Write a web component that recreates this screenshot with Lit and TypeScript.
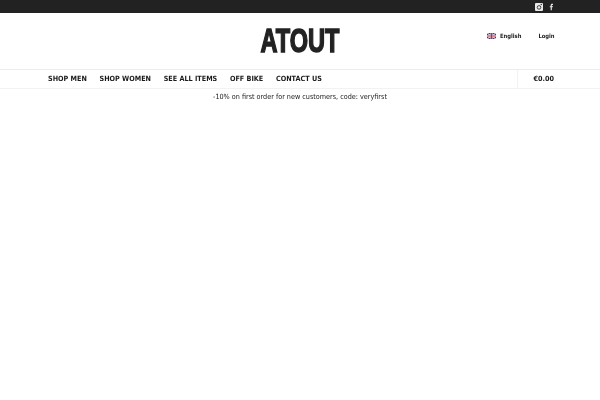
import { LitElement, html, css } from "lit";
import { customElement } from "lit/decorators.js";

@customElement("app-root")
export class AppRoot extends LitElement {
  static styles = css`
    :host { display: block; width: 600px; height: 400px; background: #fff; overflow: hidden; font-family: "DejaVu Sans", sans-serif; font-stretch: condensed; color: #1a1a1a; }
    .top { height: 13px; background: #222; display: flex; justify-content: flex-end; align-items: center; gap: 6px; padding-right: 46px; }
    .top svg { display: block; }
    .head { height: 56px; display: grid; grid-template-columns: 1fr auto 1fr; align-items: start; }
    .logo { grid-column: 2; display: block; overflow: visible; margin-top: 15px; will-change: transform; }
    .logo text { font-family: "Liberation Sans", sans-serif; font-stretch: normal; font-weight: 700; font-size: 33px; fill: #222; stroke: #222; stroke-width: 1.5px; stroke-linejoin: miter; }
    .tools { grid-column: 3; justify-self: end; display: flex; align-items: center; font-size: 5.8px; font-weight: 700; padding: 19.5px 45.5px 0 0; will-change: transform; }
    .lang { display: flex; align-items: center; gap: 4px; padding-right: 17px; }
    .nav { height: 20px; box-sizing: border-box; border-top: 1px solid #ececec; border-bottom: 1px solid #f2f2f2; display: flex; justify-content: space-between; padding-left: 48px; }
    .links { display: flex; align-items: center; gap: 12.7px; font-size: 7.2px; font-weight: 700; padding-bottom: 1px; will-change: transform; }
    .cart { width: 83px; box-sizing: border-box; border-left: 1px solid #f2f2f2; display: flex; align-items: center; justify-content: flex-end; padding: 0 46px 1px 0; font-size: 7.2px; font-weight: 700; will-change: transform; }
    .promo { text-align: center; font-size: 7.2px; line-height: 14px; padding-top: 1px; will-change: transform; }
  `;

  render() {
    return html`
      <div class="top">
        <svg width="8" height="8" viewBox="0 0 8 8" aria-label="Instagram">
          <rect width="8" height="8" rx="1" fill="#e8e8e8" />
          <circle cx="4" cy="4.4" r="1.8" fill="none" stroke="#333" stroke-width="0.9" />
          <rect x="5.6" y="0.9" width="1.4" height="1.2" fill="#444" />
        </svg>
        <svg width="5" height="8" viewBox="0 0 6 8" aria-label="Facebook">
          <path d="M2 8V4.4H.9V3H2V2C2 .8 2.7.2 3.7.2H4.8V1.5H4C3.5 1.5 3.4 1.7 3.4 2.1V3H4.8L4.6 4.4H3.4V8Z" fill="#e8e8e8" />
        </svg>
      </div>
      <div class="head">
        <svg class="logo" width="80" height="26" viewBox="0 0 80 26">
          <text x="0.5" y="24.4" textLength="79" lengthAdjust="spacingAndGlyphs">ATOUT</text>
        </svg>
        <div class="tools">
          <div class="lang">
            <svg width="9" height="6" viewBox="0 0 9 6" aria-label="UK flag">
              <rect width="9" height="6" fill="#2b2a66" />
              <path d="M0 0L9 6M9 0L0 6" stroke="#e9c9d2" stroke-width="1.2" />
              <path d="M4.5 0V6M0 3H9" stroke="#eee" stroke-width="2" />
              <path d="M4.5 0V6M0 3H9" stroke="#c8264a" stroke-width="1.1" />
            </svg>
            <span>English</span>
          </div>
          <span>Login</span>
        </div>
      </div>
      <div class="nav">
        <div class="links">
          <span>SHOP MEN</span><span>SHOP WOMEN</span><span>SEE ALL ITEMS</span><span>OFF BIKE</span><span>CONTACT US</span>
        </div>
        <div class="cart">€0.00</div>
      </div>
      <div class="promo">-10% on first order for new customers, code: veryfirst</div>
    `;
  }
}
